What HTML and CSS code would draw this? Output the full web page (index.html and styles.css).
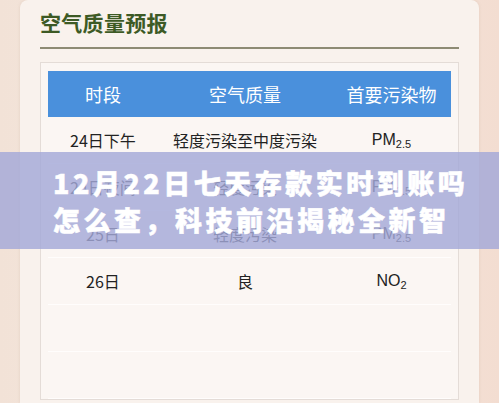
FILE: index.html
```html
<!DOCTYPE html>
<html lang="zh">
<head>
<meta charset="utf-8">
<link rel="stylesheet" href="styles.css">
</head>
<body>
<div class="page">
  <div class="card">
    <h1 class="title">空气质量预报</h1>
    <div class="rule"></div>
    <div class="panel">
      <div class="row head">
        <div class="c1">时段</div>
        <div class="c2">空气质量</div>
        <div class="c3">首要污染物</div>
      </div>
      <div class="row">
        <div class="c1">24日下午</div>
        <div class="c2">轻度污染至中度污染</div>
        <div class="c3">PM<sub>2.5</sub></div>
      </div>
      <div class="row">
        <div class="c1">24日夜间</div>
        <div class="c2">轻度污染</div>
        <div class="c3">PM<sub>2.5</sub></div>
      </div>
      <div class="row">
        <div class="c1">25日</div>
        <div class="c2">轻度污染</div>
        <div class="c3">PM<sub>2.5</sub></div>
      </div>
      <div class="row">
        <div class="c1">26日</div>
        <div class="c2">良</div>
        <div class="c3">NO<sub>2</sub></div>
      </div>
      <div class="row"></div>
      <div class="row"></div>
    </div>
  </div>
  <div class="banner">
    <p class="banner-text">12月22日七天存款实时到账吗<br>怎么查，科技前沿揭秘全新智</p>
  </div>
</div>
</body>
</html>
```

FILE: styles.css
```css
* { box-sizing: border-box; }
html, body { margin: 0; padding: 0; }
body {
  width: 499px;
  height: 403px;
  overflow: hidden;
  background: linear-gradient(90deg, #f2e2d7 0%, #f5e9e1 50%, #f3ddd1 100%);
  font-family: "Noto Sans CJK SC", "Liberation Sans", sans-serif;
}
.page {
  position: relative;
  width: 499px;
  height: 403px;
}
.card {
  margin-left: 20px;
  width: 459px;
  height: 403px;
  background: #f9f2ed;
  border-radius: 8px 8px 0 0;
  padding: 0 20px;
  box-shadow: 0 0 3px rgba(180, 150, 130, 0.25);
}
.title {
  margin: 0;
  padding-top: 8px;
  font-size: 21px;
  line-height: 28px;
  font-weight: 700;
  color: #3d5a25;
  letter-spacing: 0.3px;
}
.rule {
  margin-top: 11px;
  border-top: 2px solid #8e8b74;
}
.panel {
  margin-top: 13px;
  border: 1px solid #e4dcd7;
  background: #fbf6f3;
  padding: 8px 7px 0;
}
.row {
  display: grid;
  grid-template-columns: 110px 174px 119px;
  height: 47px;
  align-items: center;
  text-align: center;
  font-size: 16px;
  color: #222;
  border-bottom: 1.5px solid #fffdfc;
}
.row .c1, .row .c2 { font-family: "Noto Sans CJK SC", sans-serif; }
.row .c3 { font-family: "Liberation Sans", "Noto Sans CJK SC", sans-serif; }
.row.head {
  height: 46px;
  background: #4a90dc;
  color: #fff;
  font-size: 18px;
  border-bottom: none;
}
.row.head .c3 { font-family: "Noto Sans CJK SC", sans-serif; }
sub {
  font-size: 11px;
  vertical-align: -3px;
  line-height: 0;
}
.banner {
  position: absolute;
  left: 0;
  top: 152px;
  width: 499px;
  height: 97px;
  background: rgba(164, 168, 216, 0.82);
}
.banner-text {
  margin: 0;
  padding: 12px 0 0 53px;
  font-family: "Noto Sans CJK SC", sans-serif;
  font-weight: 900;
  font-size: 27px;
  line-height: 37px;
  letter-spacing: 3.5px;
  color: #fff;
  -webkit-text-stroke: 0.5px #fff;
  white-space: nowrap;
}
```
